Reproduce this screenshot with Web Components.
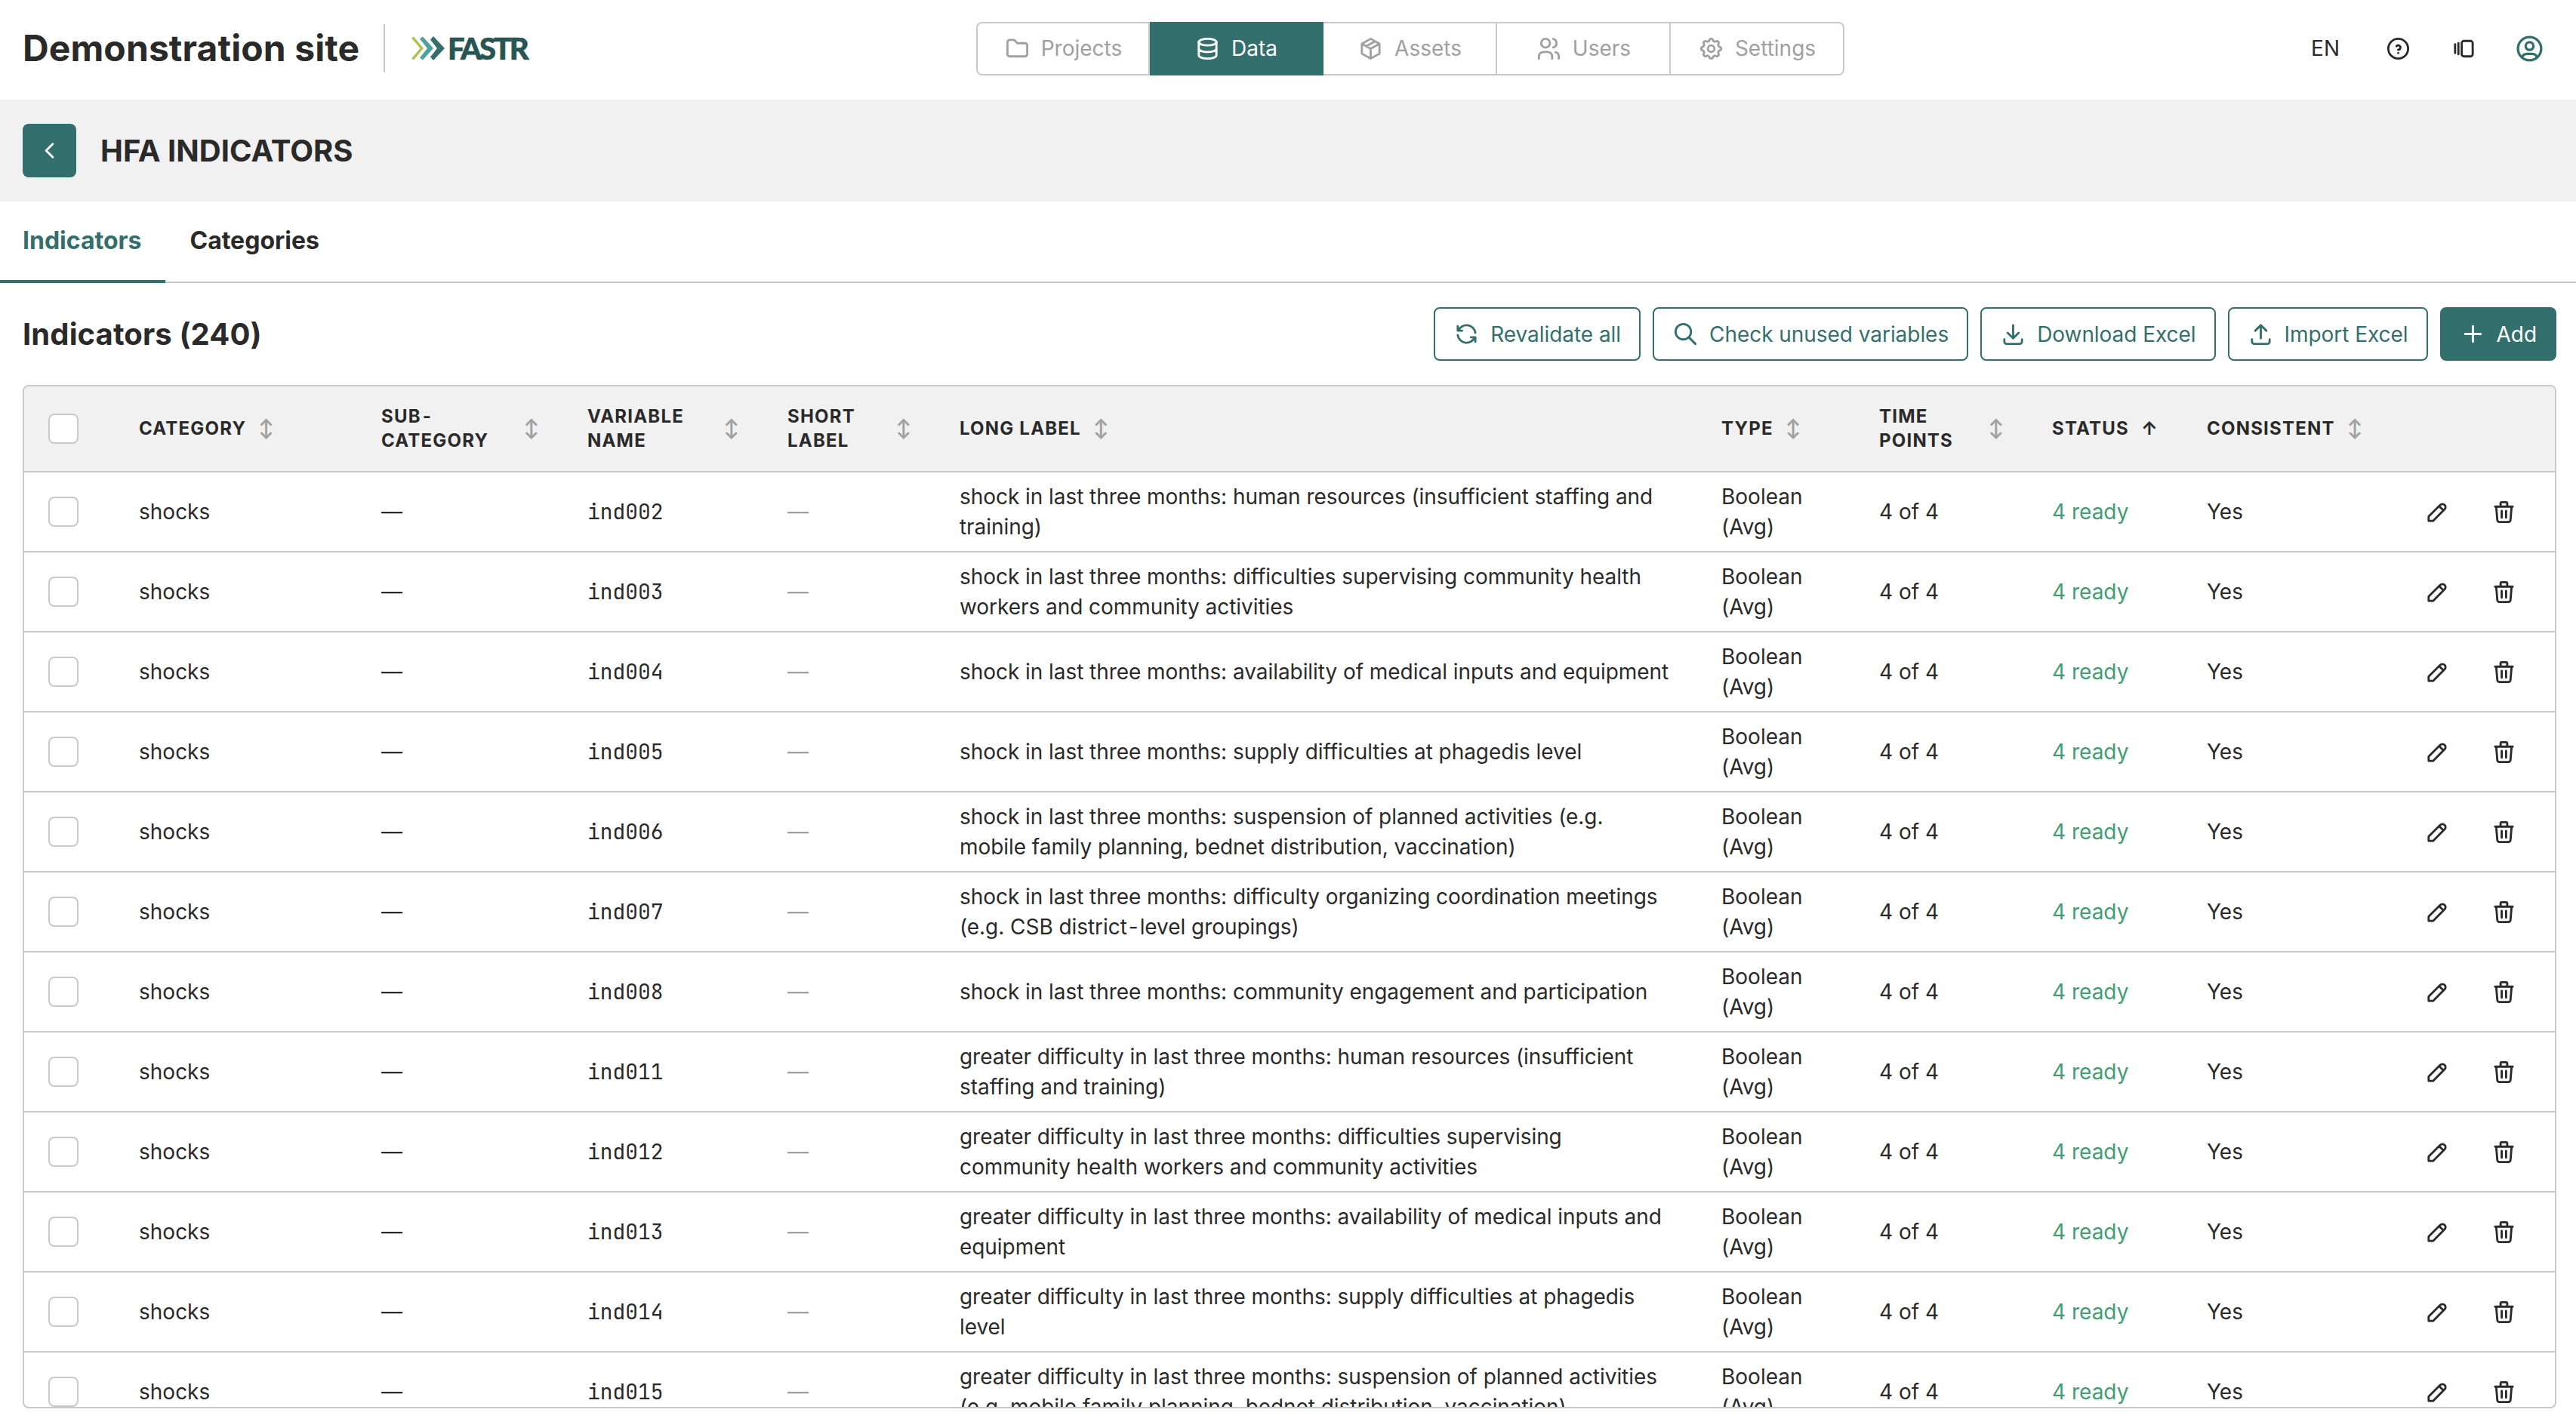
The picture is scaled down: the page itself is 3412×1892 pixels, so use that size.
<!DOCTYPE html>
<html lang="en">
  <head>
    <meta charset="UTF-8" />
    <meta name="viewport" content="width=device-width, initial-scale=1.0" />
    <title>HFA Indicators</title>
    <style>
      :root {
        --primary: #336f6c;
        --text: #2a2a2a;
        --muted: #a0a0a0;
        --line: #c9c9c9;
        --shade: #f1f1f1;
        --success: #419e73;
        --columns: 120px 321px 273px 265px 228px 1009px 209px 229px 205px 1fr;
      }

      body {
        margin: 0;
        height: 1892px;
        overflow: hidden;
        background: #fff;
        color: var(--text);
        font: 28px/40px Inter, "Liberation Sans", sans-serif;
      }
    </style>
  </head>
  <body>
    <app-shell></app-shell>

    <template id="app-shell">
      <style>
        :host {
          display: flex;
          flex-direction: column;
          height: 1892px;
        }
      </style>
      <app-header>Demonstration site</app-header>
      <page-heading>HFA INDICATORS</page-heading>
      <tab-bar>
        <tab-item active>Indicators</tab-item>
        <tab-item>Categories</tab-item>
      </tab-bar>
      <table-toolbar>
        Indicators (240)
        <ui-button slot="actions" icon="refresh">Revalidate all</ui-button>
        <ui-button slot="actions" icon="search">Check unused variables</ui-button>
        <ui-button slot="actions" icon="download">Download Excel</ui-button>
        <ui-button slot="actions" icon="upload">Import Excel</ui-button>
        <ui-button slot="actions" icon="plus" solid>Add</ui-button>
      </table-toolbar>
      <indicator-table></indicator-table>
    </template>

    <template id="app-header">
      <style>
        :host {
          display: flex;
          align-items: center;
          box-sizing: border-box;
          height: 132px;
          padding: 0 41px 4px 30px;
          flex: none;
        }
        h1 {
          margin: 0;
          width: 478px;
          font-size: 48px;
          line-height: 64px;
          font-weight: 700;
          letter-spacing: 0.1px;
          white-space: nowrap;
        }
        .rule {
          width: 2px;
          height: 64px;
          background: var(--line);
          margin-right: 35px;
        }
        nav {
          display: flex;
          margin-left: 592px;
        }
        .tools {
          display: flex;
          align-items: center;
          margin-left: auto;
        }
        .tools span {
          margin-right: 60px;
        }
        .tools ui-icon {
          margin-right: 52px;
        }
        .tools ui-icon.user {
          --size: 41px;
          margin: 0 0 0 -3px;
          color: var(--primary);
        }
      </style>
      <h1><slot></slot></h1>
      <div class="rule"></div>
      <fastr-logo>FASTR</fastr-logo>
      <nav>
        <nav-item icon="folder">Projects</nav-item>
        <nav-item icon="database" active>Data</nav-item>
        <nav-item icon="package">Assets</nav-item>
        <nav-item icon="users">Users</nav-item>
        <nav-item icon="settings">Settings</nav-item>
      </nav>
      <div class="tools">
        <span>EN</span>
        <ui-icon name="help"></ui-icon>
        <ui-icon name="versions"></ui-icon>
        <ui-icon name="user" class="user"></ui-icon>
      </div>
    </template>

    <template id="fastr-logo">
      <style>
        :host {
          display: flex;
          align-items: center;
          width: 156px;
          height: 34px;
          color: #285552;
          font: 900 40px/34px Lato, sans-serif;
          letter-spacing: -3.2px;
          -webkit-text-stroke: 0.6px #285552;
        }
        svg {
          width: 44px;
          height: 34px;
          margin-right: 4px;
          flex: none;
        }
      </style>
      <svg viewBox="0 0 44 34">
        <path d="M0 3.500 3 1.500 16 17 3 32.500 0 30.500 11.500 17z" fill="#b2c250" />
        <path d="M11 4.500 15 1.500 29 17 15 32.500 11 29.500 21 17z" fill="#4ea19d" />
        <path d="M25 5.500 29 1 44 17 29 33 25 28.500 34 17z" fill="#336f6c" />
      </svg>
      <slot></slot>
    </template>

    <template id="nav-item">
      <style>
        :host {
          display: flex;
          align-items: center;
          justify-content: center;
          gap: 14px;
          box-sizing: border-box;
          width: 230px;
          height: 71px;
          border: 2px solid var(--line);
          border-left-width: 0;
          color: var(--muted);
        }
        :host(:first-child) {
          border-left-width: 2px;
          border-radius: 8px 0 0 8px;
        }
        :host(:last-child) {
          border-radius: 0 8px 8px 0;
        }
        :host([active]) {
          background: var(--primary);
          border-color: var(--primary);
          color: #fff;
        }
      </style>
      <ui-icon></ui-icon>
      <slot></slot>
    </template>

    <template id="page-heading">
      <style>
        :host {
          display: flex;
          align-items: center;
          gap: 32px;
          box-sizing: border-box;
          height: 135px;
          padding: 0 30px;
          flex: none;
          background: var(--shade);
          font-size: 40px;
          font-weight: 700;
        }
        .back {
          display: grid;
          place-items: center;
          width: 71px;
          height: 71px;
          border-radius: 8px;
          background: var(--primary);
          color: #fff;
        }
      </style>
      <div class="back"><ui-icon name="chevron"></ui-icon></div>
      <slot></slot>
    </template>

    <template id="tab-bar">
      <style>
        :host {
          display: flex;
          box-sizing: border-box;
          height: 108px;
          flex: none;
          border-bottom: 2px solid var(--line);
        }
      </style>
      <slot></slot>
    </template>

    <template id="tab-item">
      <style>
        :host {
          display: flex;
          align-items: center;
          box-sizing: border-box;
          height: 108px;
          padding: 0 32px;
          border-bottom: 4px solid transparent;
          font-size: 32px;
          font-weight: 700;
        }
        :host(:first-child) {
          padding-left: 30px;
        }
        :host([active]) {
          color: var(--primary);
          border-color: var(--primary);
        }
      </style>
      <slot></slot>
    </template>

    <template id="table-toolbar">
      <style>
        :host {
          display: flex;
          align-items: center;
          justify-content: space-between;
          height: 71px;
          padding: 32px 26px 32px 30px;
          flex: none;
          font-size: 40px;
          font-weight: 700;
        }
        .title {
          letter-spacing: 0.1px;
        }
        .actions {
          display: flex;
          gap: 16px;
          font-size: 28px;
          font-weight: 400;
          letter-spacing: -0.05px;
        }
      </style>
      <div class="title"><slot></slot></div>
      <div class="actions"><slot name="actions"></slot></div>
    </template>

    <template id="ui-button">
      <style>
        :host {
          display: flex;
          align-items: center;
          gap: 14px;
          box-sizing: border-box;
          height: 71px;
          padding: 0 24px;
          border: 2px solid var(--primary);
          border-radius: 8px;
          color: var(--primary);
          white-space: nowrap;
        }
        :host([solid]) {
          background: var(--primary);
          color: #fff;
        }
      </style>
      <ui-icon></ui-icon>
      <slot></slot>
    </template>

    <template id="check-box">
      <style>
        :host {
          display: block;
          box-sizing: border-box;
          width: 40px;
          height: 40px;
          border: 2px solid var(--line);
          border-radius: 8px;
          background: #fff;
        }
      </style>
    </template>

    <template id="indicator-table">
      <style>
        :host {
          display: block;
          box-sizing: border-box;
          height: 1356px;
          margin: 0 26px 0 30px;
          flex: none;
          overflow: hidden;
          border: 2px solid var(--line);
          border-radius: 8px;
        }
        .head {
          display: grid;
          grid-template-columns: var(--columns);
          align-items: center;
          height: 112px;
          background: var(--shade);
          border-bottom: 2px solid var(--line);
        }
        check-box {
          margin-left: 32px;
        }
        .hyphen {
          margin: 0 2px;
        }
      </style>
      <div class="head">
        <check-box></check-box>
        <column-title>CATEGORY</column-title>
        <column-title>SUB<span class="hyphen">-</span>CATEGORY</column-title>
        <column-title>VARIABLE NAME</column-title>
        <column-title>SHORT LABEL</column-title>
        <column-title>LONG LABEL</column-title>
        <column-title>TYPE</column-title>
        <column-title>TIME POINTS</column-title>
        <column-title sorted>STATUS</column-title>
        <column-title>CONSISTENT</column-title>
      </div>
      <div class="body"></div>
    </template>

    <template id="column-title">
      <style>
        :host {
          display: flex;
          align-items: center;
          gap: 16px;
          padding: 0 32px;
          font-size: 24px;
          line-height: 32px;
          font-weight: 700;
          letter-spacing: 1.2px;
        }
        .arrow {
          color: var(--muted);
          letter-spacing: 0;
        }
        :host([sorted]) .arrow {
          color: var(--text);
        }
      </style>
      <span><slot></slot></span>
      <span class="arrow"></span>
    </template>

    <template id="indicator-row">
      <style>
        :host {
          display: grid;
          grid-template-columns: var(--columns) 244px;
          align-items: center;
          height: 104px;
          border-bottom: 2px solid var(--line);
        }
        check-box {
          margin-left: 32px;
        }
        .cell {
          padding: 0 32px;
        }
        .name {
          font-family: "JetBrains Mono", "Roboto Mono", "DejaVu Sans Mono", monospace;
          font-size: 27.900px;
        }
        .label {
          letter-spacing: -0.055px;
        }
        .muted {
          color: var(--muted);
        }
        .status {
          color: var(--success);
        }
        .actions {
          display: flex;
          justify-content: flex-end;
          gap: 53px;
          padding-right: 50px;
        }
      </style>
      <check-box></check-box>
      <div class="cell">shocks</div>
      <div class="cell">—</div>
      <div class="cell name"><slot name="name"></slot></div>
      <div class="cell muted">—</div>
      <div class="cell label"><slot></slot></div>
      <div class="cell">Boolean (Avg)</div>
      <div class="cell">4 of 4</div>
      <div class="cell status">4 ready</div>
      <div class="cell">Yes</div>
      <div class="actions">
        <ui-icon name="pencil"></ui-icon>
        <ui-icon name="trash"></ui-icon>
      </div>
    </template>

    <script>
      // 24 x 24 outline icons, drawn with the current text colour
      const icons = {
        folder: '<path d="M5 4h4l3 3h7a2 2 0 0 1 2 2v8a2 2 0 0 1-2 2H5a2 2 0 0 1-2-2V6a2 2 0 0 1 2-2"/>',
        database: '<ellipse cx="12" cy="6" rx="8" ry="3"/><path d="M4 6v6c0 1.657 3.582 3 8 3s8-1.343 8-3V6M4 12v6c0 1.657 3.582 3 8 3s8-1.343 8-3v-6"/>',
        package: '<path d="M12 3l8 4.500v9L12 21l-8-4.500v-9L12 3M12 12l8-4.500M12 12v9M12 12L4 7.500M16 5.250l-8 4.500"/>',
        users: '<circle cx="9" cy="7" r="4"/><path d="M3 21v-2a4 4 0 0 1 4-4h4a4 4 0 0 1 4 4v2M16 3.130a4 4 0 0 1 0 7.750M21 21v-2a4 4 0 0 0-3-3.850"/>',
        settings: '<path d="M10.325 4.317c.426-1.756 2.924-1.756 3.350 0a1.724 1.724 0 0 0 2.573 1.066c1.543-.94 3.310.826 2.370 2.370a1.724 1.724 0 0 0 1.065 2.572c1.756.426 1.756 2.924 0 3.350a1.724 1.724 0 0 0-1.066 2.573c.94 1.543-.826 3.310-2.370 2.370a1.724 1.724 0 0 0-2.572 1.065c-.426 1.756-2.924 1.756-3.350 0a1.724 1.724 0 0 0-2.573-1.066c-1.543.94-3.310-.826-2.370-2.370a1.724 1.724 0 0 0-1.065-2.572c-1.756-.426-1.756-2.924 0-3.350a1.724 1.724 0 0 0 1.066-2.573c-.94-1.543.826-3.310 2.370-2.370c1 .608 2.296.070 2.572-1.065z"/><circle cx="12" cy="12" r="3"/>',
        help: '<circle cx="12" cy="12" r="9"/><path d="M12 16v.010M12 13a2 2 0 0 0 .914-3.782a1.980 1.980 0 0 0-2.414.483"/>',
        versions: '<rect x="10" y="5" width="10" height="14" rx="2"/><path d="M7 7v10M4 8v8"/>',
        user: '<circle cx="12" cy="12" r="9"/><circle cx="12" cy="10" r="3"/><path d="M6.168 18.849A4 4 0 0 1 10 16h4a4 4 0 0 1 3.834 2.855"/>',
        chevron: '<path d="M15 6l-6 6l6 6"/>',
        refresh: '<path d="M20 11A8.100 8.100 0 0 0 4.500 9M4 5v4h4M4 13a8.100 8.100 0 0 0 15.500 2m.5 4v-4h-4"/>',
        search: '<circle cx="10" cy="10" r="7"/><path d="M21 21l-6-6"/>',
        download: '<path d="M4 17v2a2 2 0 0 0 2 2h12a2 2 0 0 0 2-2v-2M7 11l5 5l5-5M12 4v12"/>',
        upload: '<path d="M4 17v2a2 2 0 0 0 2 2h12a2 2 0 0 0 2-2v-2M7 9l5-5l5 5M12 4v12"/>',
        plus: '<path d="M12 5v14M5 12h14"/>',
        pencil: '<path d="M4 20h4L18.500 9.500a2.828 2.828 0 1 0-4-4L4 16v4M13.500 6.500l4 4"/>',
        trash: '<path d="M4 7h16M10 11v6M14 11v6M5 7l1 12a2 2 0 0 0 2 2h8a2 2 0 0 0 2-2l1-12M9 7V4a1 1 0 0 1 1-1h4a1 1 0 0 1 1 1v3"/>',
      };

      const rows = [
        ['ind002', 'shock in last three months: human resources (insufficient staffing and training)'],
        ['ind003', 'shock in last three months: difficulties supervising community health workers and community activities'],
        ['ind004', 'shock in last three months: availability of medical inputs and equipment'],
        ['ind005', 'shock in last three months: supply difficulties at phagedis level'],
        ['ind006', 'shock in last three months: suspension of planned activities (e.g. mobile family planning, bednet distribution, vaccination)'],
        ['ind007', 'shock in last three months: difficulty organizing coordination meetings (e.g. CSB district-level groupings)'],
        ['ind008', 'shock in last three months: community engagement and participation'],
        ['ind011', 'greater difficulty in last three months: human resources (insufficient staffing and training)'],
        ['ind012', 'greater difficulty in last three months: difficulties supervising community health workers and community activities'],
        ['ind013', 'greater difficulty in last three months: availability of medical inputs and equipment'],
        ['ind014', 'greater difficulty in last three months: supply difficulties at phagedis level'],
        ['ind015', 'greater difficulty in last three months: suspension of planned activities (e.g. mobile family planning, bednet distribution, vaccination)'],
      ];

      // Clones the template whose id is the element's own tag name
      class TemplateElement extends HTMLElement {
        constructor() {
          super();
          this.attachShadow({ mode: 'open' });
          const template = document.getElementById(this.localName);
          this.shadowRoot.appendChild(template.content.cloneNode(true));
        }
      }

      class UiIcon extends HTMLElement {
        static observedAttributes = ['name'];

        constructor() {
          super();
          this.attachShadow({ mode: 'open' });
        }

        attributeChangedCallback(attribute, previous, value) {
          this.shadowRoot.innerHTML = `
            <style>
              :host { display: block; flex: none; width: var(--size, 35px); height: var(--size, 35px); }
              svg { display: block; width: 100%; height: 100%; }
            </style>
            <svg viewBox="0 0 24 24" fill="none" stroke="currentColor" stroke-width="1.95"
              stroke-linecap="round" stroke-linejoin="round">${icons[value] || ''}</svg>`;
        }
      }

      class IconHolder extends TemplateElement {
        connectedCallback() {
          this.shadowRoot.querySelector('ui-icon').setAttribute('name', this.getAttribute('icon'));
        }
      }

      class ColumnTitle extends TemplateElement {
        connectedCallback() {
          this.shadowRoot.querySelector('.arrow').textContent = this.hasAttribute('sorted') ? '↑' : '↕';
        }
      }

      class IndicatorTable extends TemplateElement {
        connectedCallback() {
          const body = this.shadowRoot.querySelector('.body');
          body.innerHTML = rows
            .map(([name, label]) => {
              const text = label.replace('-', '<span class="hyphen">-</span>');
              return `<indicator-row><span slot="name">${name}</span>${text}</indicator-row>`;
            })
            .join('');
        }
      }

      customElements.define('ui-icon', UiIcon);
      customElements.define('nav-item', class extends IconHolder {});
      customElements.define('ui-button', class extends IconHolder {});
      customElements.define('column-title', ColumnTitle);
      ['check-box', 'fastr-logo', 'app-header', 'page-heading', 'tab-item', 'tab-bar', 'table-toolbar', 'indicator-row'].forEach((name) => {
        customElements.define(name, class extends TemplateElement {});
      });
      customElements.define('indicator-table', IndicatorTable);
      customElements.define('app-shell', class extends TemplateElement {});
    </script>
  </body>
</html>
